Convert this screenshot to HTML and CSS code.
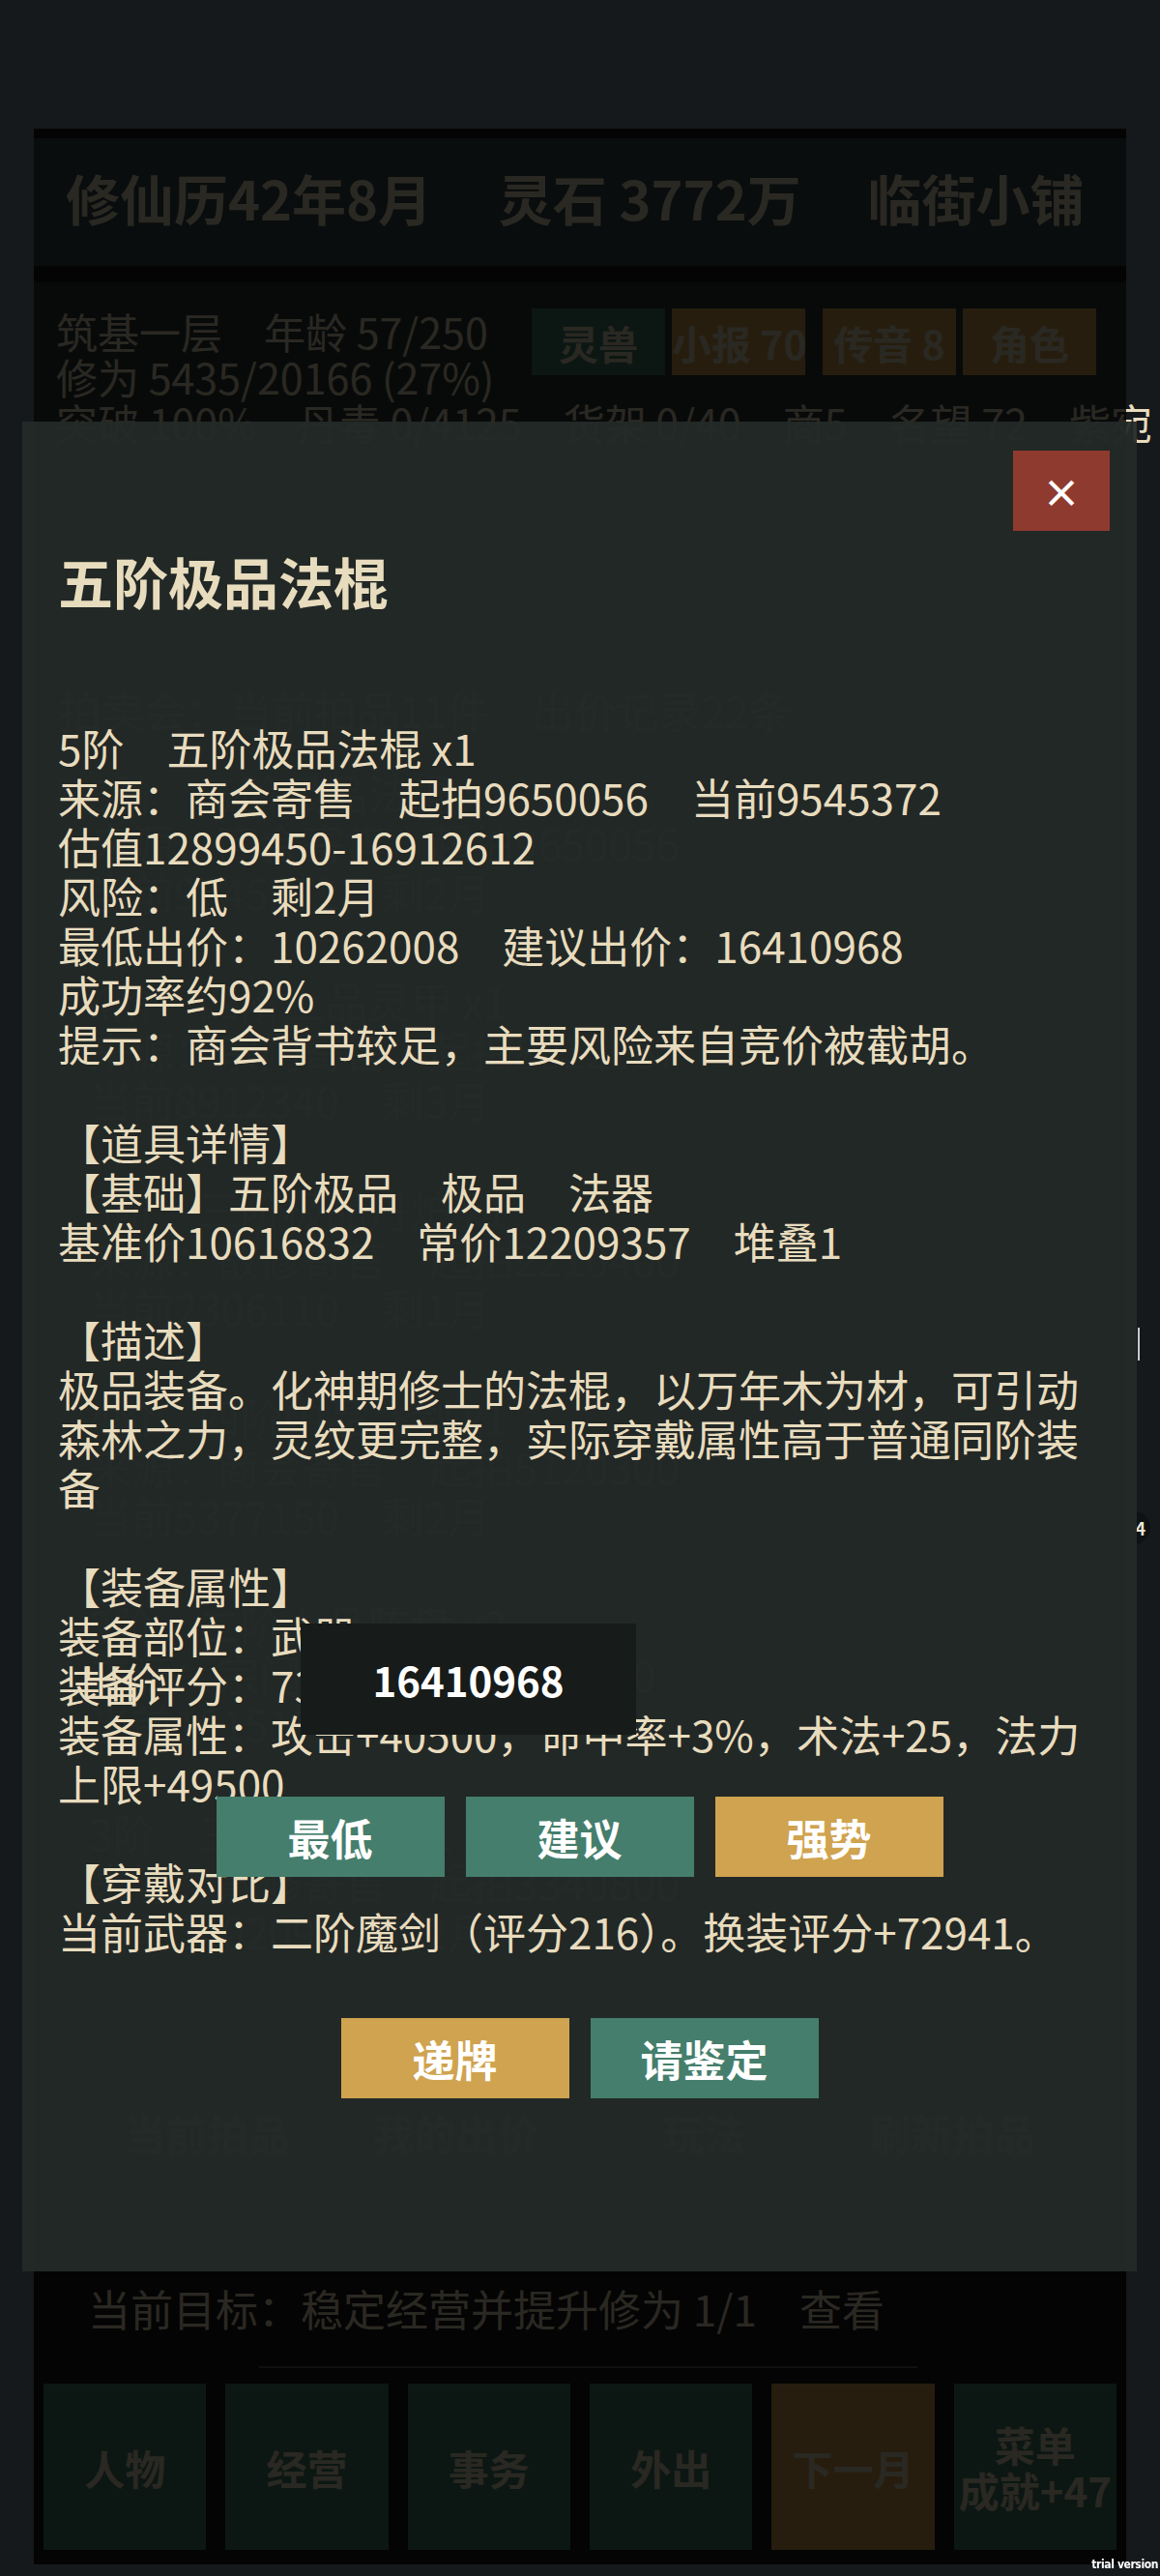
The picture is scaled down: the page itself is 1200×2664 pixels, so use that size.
FILE: index.html
```html
<!DOCTYPE html>
<html lang="zh">

<head>
    <meta charset="UTF-8">
    <meta name="viewport" content="width=device-width, initial-scale=1.0">
    <title>临街小铺</title>
    <link rel="stylesheet" href="styles.css">
</head>

<body>
    <div id="game" class="game">
        <header class="top-bar">修仙历42年8月　 灵石 3772万　 临街小铺</header>

        <section class="status">
            <div class="status-row">
                <div class="status-text">
                    <div>筑基一层　年龄 57/250</div>
                    <div>修为 5435/20166 (27%)</div>
                </div>
                <div class="status-btns">
                    <div class="btn-group">
                        <button class="tag teal">灵兽</button>
                        <button class="tag gold">小报 70</button>
                    </div>
                    <div class="btn-group">
                        <button class="tag gold">传音 8</button>
                        <button class="tag gold">角色</button>
                    </div>
                </div>
            </div>
            <div class="status-line">突破 100%　丹毒 0/4125　货架 0/40　商5　名望 72　紫宛</div>
        </section>

        <!-- auction page behind the dialog -->
        <section class="auction">
            <div class="auction-head">拍卖会：当前拍品11件　出价记录22条</div>
            <div class="lot">
                <div>5阶　五阶极品法棍 x1</div>
                <div>来源：商会寄售　起拍9650056</div>
                <div>当前9545372　剩2月</div>
            </div>
            <div class="lot">
                <div>4阶　四阶上品灵甲 x1</div>
                <div>来源：宗门寄售　起拍8812067</div>
                <div>当前8912340　剩3月</div>
            </div>
            <div class="lot">
                <div>3阶　三阶极品丹炉 x1</div>
                <div>来源：散修寄售　起拍2210400</div>
                <div>当前2306110　剩1月</div>
            </div>
            <div class="lot">
                <div>4阶　四阶中品飞剑 x1</div>
                <div>来源：商会寄售　起拍5120300</div>
                <div>当前5377150　剩2月</div>
            </div>
            <div class="lot">
                <div>2阶　二阶上品阵盘 x2</div>
                <div>来源：宗门寄售　起拍960200</div>
                <div>当前1015178　剩4月</div>
            </div>
            <div class="lot">
                <div>3阶　三阶极品法衣 x1</div>
                <div>来源：散修寄售　起拍3340800</div>
                <div>当前3402090　剩2月</div>
            </div>
            <div class="auction-tabs">
                <button>当前拍品</button>
                <button>我的出价</button>
                <button>玩法</button>
                <button>刷新拍品</button>
            </div>
        </section>

        <div class="goal">当前目标：稳定经营并提升修为 1/1　查看</div>
        <div class="goal-track"></div>

        <nav class="nav">
            <button class="teal">人物</button>
            <button class="teal">经营</button>
            <button class="teal">事务</button>
            <button class="teal">外出</button>
            <button class="gold">下一月</button>
            <button class="teal">菜单<br>成就+47</button>
        </nav>

        <span class="side-tick"></span>
        <span class="side-badge">4</span>
        <div class="mask"></div>
    </div>

    <div id="item-modal" class="modal">
        <button class="modal-close">×</button>
        <h2 class="modal-title">五阶极品法棍</h2>
        <div class="item-info">5阶　五阶极品法棍 x1
来源：商会寄售　起拍9650056　当前9545372
估值12899450-16912612
风险：低　剩2月
最低出价：10262008　建议出价：16410968
成功率约92%
提示：商会背书较足，主要风险来自竞价被截胡。

【道具详情】
【基础】五阶极品　极品　法器
基准价10616832　常价12209357　堆叠1

【描述】
极品装备。化神期修士的法棍，以万年木为材，可引动森林之力，灵纹更完整，实际穿戴属性高于普通同阶装备

【装备属性】
装备部位：武器
装备评分：73215
装备属性：攻击+40500，命中率+3%，术法+25，法力上限+49500

【穿戴对比】
当前武器：二阶魔剑（评分216）。换装评分+72941。</div>

        <div class="bid">
            <div class="bid-row">
                <label class="bid-label" for="bid-price">出价</label>
                <input class="bid-input" id="bid-price" type="text" value="16410968">
            </div>
            <div class="bid-quick">
                <button class="btn teal">最低</button>
                <button class="btn teal">建议</button>
                <button class="btn gold">强势</button>
            </div>
            <div class="bid-actions">
                <button class="btn gold">递牌</button>
                <button class="btn teal">请鉴定</button>
            </div>
        </div>
    </div>

    <div class="watermark">trial version</div>
</body>

</html>
```

FILE: styles.css
```css
html {
    overflow: hidden;
}

body {
    margin: 0;
    padding: 0;
    position: relative;
    min-height: 2664px;
    background-color: #15191c;
    color: #e8dcbe;
    font-family: "Noto Sans CJK SC", "Noto Sans", sans-serif;
}

button,
input {
    font-family: "Noto Sans CJK SC", "Noto Sans", sans-serif;
    border: none;
    padding: 0;
}

.teal {
    background-color: #457e6c;
}

.gold {
    background-color: #cfa34f;
}

/* game screen (dimmed behind the dialog) */
.game {
    position: relative;
    width: 1130px;
    height: 2519px;
    margin: 133px auto 0;
    padding-top: 10px;
    box-sizing: border-box;
    background-color: #161616;
    display: flex;
    flex-direction: column;
}

.top-bar {
    height: 132px;
    box-sizing: border-box;
    padding: 27px 0 0 33px;
    background-color: #384848;
    font-size: 56px;
    font-weight: bold;
    line-height: 67px;
    white-space: pre;
}

.status {
    margin-top: 17px;
    padding: 27px 31px 20px 23px;
    background-color: #2c3838;
    font-size: 43px;
    line-height: 47px;
}

.status-row {
    display: flex;
    justify-content: space-between;
}

.status-btns {
    display: flex;
    gap: 18px;
}

.btn-group {
    display: flex;
    gap: 7px;
}

.tag {
    width: 138px;
    height: 69px;
    color: #e8dcbe;
    font-size: 41px;
    font-weight: bold;
    white-space: nowrap;
}

.status-line {
    white-space: nowrap;
}

.auction {
    margin-top: 229px;
    padding: 0 26px;
    font-size: 44px;
    line-height: 51px;
}

.lot {
    margin-top: 12px;
    padding: 24px 30px;
    border: 1px solid #3a4444;
}

.auction-head + .lot {
    margin-top: 10px;
}

.auction-tabs {
    display: flex;
    justify-content: center;
    gap: 16px;
    margin-top: 115px;
}

.auction-tabs button {
    width: 241px;
    height: 84px;
    background-color: #232b2b;
    color: #e8dcbe;
    font-size: 43px;
    font-weight: bold;
}

.goal {
    margin-top: auto;
    padding: 13px 0 0 56px;
    font-size: 44px;
    line-height: 51px;
}

.goal-track {
    width: 681px;
    height: 2px;
    margin: 34px 0 0 233px;
    background-color: #5a5a5a;
}

.nav {
    display: flex;
    gap: 20px;
    margin-top: 16px;
    padding: 0 10px 15px;
}

.nav button {
    flex: 1;
    height: 172px;
    color: #e8dcbe;
    font-size: 42px;
    font-weight: bold;
    line-height: 47px;
}

.side-tick {
    position: absolute;
    top: 1240px;
    right: -14px;
    width: 2px;
    height: 34px;
    background-color: #c8ccce;
}

.side-badge {
    position: absolute;
    top: 1430px;
    right: -25px;
    width: 50px;
    height: 34px;
    box-sizing: border-box;
    padding-right: 5px;
    border-radius: 17px;
    background-color: #0f1214;
    color: #ece6d8;
    font-size: 18px;
    font-weight: bold;
    line-height: 34px;
    text-align: right;
}

.mask {
    position: absolute;
    top: 0;
    left: 0;
    right: 0;
    bottom: 0;
    background-color: rgba(0, 0, 0, 0.82);
}

/* item dialog */
.modal {
    position: absolute;
    top: 436px;
    left: 23px;
    width: 1153px;
    height: 1913px;
    box-sizing: border-box;
    padding: 130px 37px 0;
    background-color: rgba(36, 42, 40, 0.94);
}

.modal-close {
    position: absolute;
    top: 30px;
    right: 28px;
    width: 100px;
    height: 83px;
    background-color: #8f3a2e;
    color: #fff;
    font-size: 40px;
    font-weight: bold;
}

.modal-title {
    margin: 0;
    font-size: 57px;
    font-weight: bold;
    line-height: 68px;
}

.item-info {
    margin-top: 114px;
    white-space: pre-wrap;
    font-size: 44px;
    line-height: 51px;
}

.bid {
    position: absolute;
    top: 1243px;
    left: 0;
    right: 0;
}

.bid-row {
    display: flex;
    align-items: center;
    padding-left: 60px;
}

.bid-label {
    width: 228px;
    font-size: 43px;
}

.bid-input {
    width: 347px;
    height: 115px;
    background-color: #171b1a;
    color: #fff;
    font-size: 42px;
    font-weight: bold;
    text-align: center;
    outline: none;
}

.bid-quick,
.bid-actions {
    display: flex;
    justify-content: center;
    gap: 22px;
}

.bid-quick {
    margin-top: 64px;
}

.bid-actions {
    margin-top: 146px;
}

.btn {
    width: 236px;
    height: 83px;
    color: #fff;
    font-size: 44px;
    font-weight: bold;
}

.watermark {
    position: fixed;
    right: 2px;
    bottom: 5px;
    color: #fff;
    font-family: "DejaVu Sans Condensed", "DejaVu Sans", sans-serif;
    font-size: 12px;
    font-weight: bold;
    letter-spacing: -0.4px;
}
```
